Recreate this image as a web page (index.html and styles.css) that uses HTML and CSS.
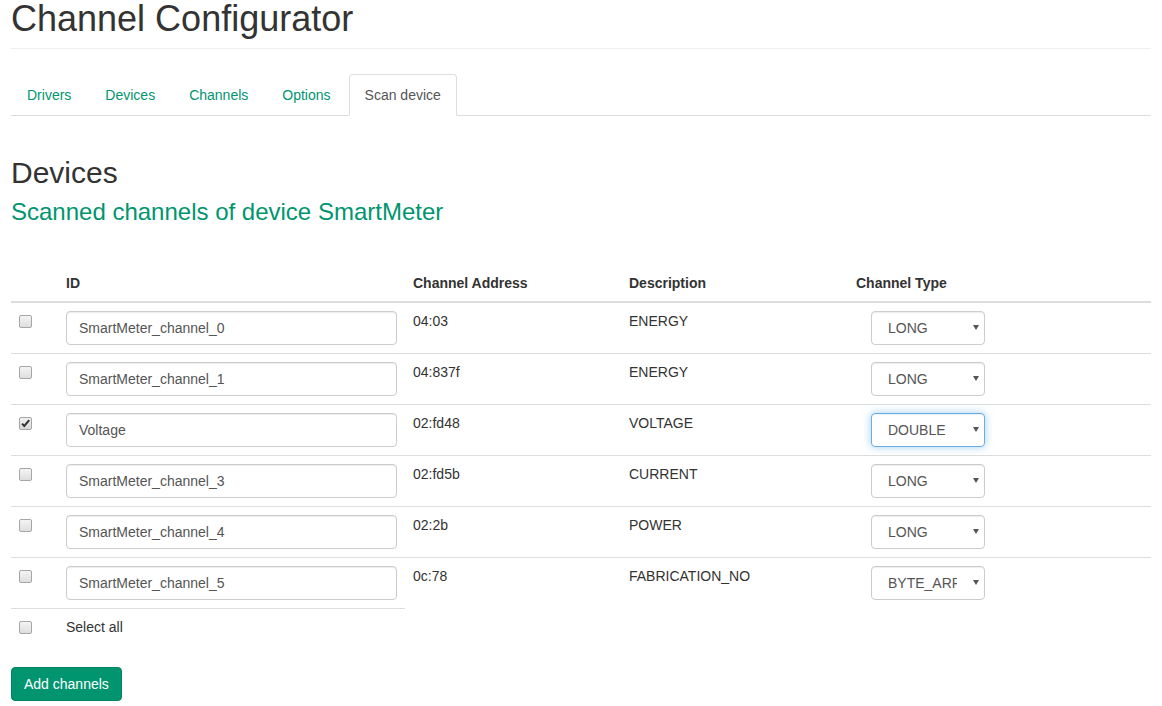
FILE: index.html
```html
<!DOCTYPE html>
<html>
<head>
<meta charset="utf-8">
<title>Channel Configurator</title>
<link rel="stylesheet" href="styles.css">
</head>
<body>
<div class="container">
  <div class="page-header"><h1>Channel Configurator</h1></div>
  <ul class="nav-tabs">
    <li><a href="#">Drivers</a></li>
    <li><a href="#">Devices</a></li>
    <li><a href="#">Channels</a></li>
    <li><a href="#">Options</a></li>
    <li class="active"><a href="#">Scan device</a></li>
  </ul>
  <div class="tab-content">
    <h2 class="title">Devices</h2>
    <h3 class="subtitle">Scanned channels of device SmartMeter</h3>
    <table class="table">
      <colgroup>
        <col class="c-check"><col class="c-id"><col class="c-addr"><col class="c-desc"><col class="c-type">
      </colgroup>
      <thead>
        <tr><th></th><th>ID</th><th>Channel Address</th><th>Description</th><th>Channel Type</th></tr>
      </thead>
      <tbody>
        <tr>
          <td><input type="checkbox" class="chk"></td>
          <td><input type="text" class="form-control" value="SmartMeter_channel_0"></td>
          <td>04:03</td><td>ENERGY</td>
          <td><div class="sel-wrap"><select class="form-control sel"><option>LONG</option></select></div></td>
        </tr>
        <tr>
          <td><input type="checkbox" class="chk"></td>
          <td><input type="text" class="form-control" value="SmartMeter_channel_1"></td>
          <td>04:837f</td><td>ENERGY</td>
          <td><div class="sel-wrap"><select class="form-control sel"><option>LONG</option></select></div></td>
        </tr>
        <tr>
          <td><input type="checkbox" class="chk" checked></td>
          <td><input type="text" class="form-control" value="Voltage"></td>
          <td>02:fd48</td><td>VOLTAGE</td>
          <td><div class="sel-wrap"><select class="form-control sel is-focus"><option>DOUBLE</option></select></div></td>
        </tr>
        <tr>
          <td><input type="checkbox" class="chk"></td>
          <td><input type="text" class="form-control" value="SmartMeter_channel_3"></td>
          <td>02:fd5b</td><td>CURRENT</td>
          <td><div class="sel-wrap"><select class="form-control sel"><option>LONG</option></select></div></td>
        </tr>
        <tr>
          <td><input type="checkbox" class="chk"></td>
          <td><input type="text" class="form-control" value="SmartMeter_channel_4"></td>
          <td>02:2b</td><td>POWER</td>
          <td><div class="sel-wrap"><select class="form-control sel"><option>LONG</option></select></div></td>
        </tr>
        <tr>
          <td><input type="checkbox" class="chk"></td>
          <td><input type="text" class="form-control" value="SmartMeter_channel_5"></td>
          <td>0c:78</td><td>FABRICATION_NO</td>
          <td><div class="sel-wrap"><select class="form-control sel"><option>BYTE_ARRAY</option></select></div></td>
        </tr>
        <tr class="select-all">
          <td><input type="checkbox" class="chk"></td>
          <td>Select all</td>
        </tr>
      </tbody>
    </table>
    <button class="btn">Add channels</button>
  </div>
</div>
</body>
</html>
```
FILE: styles.css
```css
* { box-sizing: border-box; }
html, body { margin: 0; padding: 0; }
body {
  font-family: "Liberation Sans", Arial, Helvetica, sans-serif;
  font-size: 14px;
  line-height: 20px;
  color: #333;
  background: #fff;
}
.container { padding: 0 11px; }
.page-header {
  padding-bottom: 9px;
  border-bottom: 1px solid #eee;
  margin: 0 0 25px;
}
.page-header h1 {
  margin: -1px 0 0;
  font-size: 36px;
  line-height: 1.1;
  font-weight: 500;
}
.nav-tabs {
  list-style: none;
  margin: 0;
  padding: 0;
  display: flex;
  border-bottom: 1px solid #ddd;
}
.nav-tabs li { margin-bottom: -1px; }
.nav-tabs a {
  display: block;
  padding: 10px 15px;
  margin-right: 2px;
  line-height: 20px;
  border: 1px solid transparent;
  border-radius: 4px 4px 0 0;
  color: #00956f;
  text-decoration: none;
}
.nav-tabs .active a {
  color: #555;
  background: #fff;
  border-color: #ddd #ddd transparent;
}
.title {
  margin: 40px 0 0;
  font-size: 30px;
  line-height: 33px;
  font-weight: 500;
}
.subtitle {
  margin: 10px 0 0;
  font-size: 24px;
  line-height: 26.4px;
  font-weight: 500;
  color: #00956f;
}
.table {
  margin-top: 40px;
  width: 100%;
  border-collapse: collapse;
  border-spacing: 0;
  table-layout: fixed;
  margin-bottom: 22px;
}
.c-check { width: 47px; }
.c-id { width: 347px; }
.c-addr { width: 216px; }
.c-desc { width: 227px; }
.table th, .table td {
  padding: 8px;
  text-align: left;
  vertical-align: top;
  line-height: 20px;
}
.table th {
  font-weight: bold;
  border-bottom: 2px solid #ddd;
}
.table tbody td { border-top: 1px solid #ddd; }
.table tbody tr:first-child td { border-top: 0; }
.chk {
  -webkit-appearance: none;
  appearance: none;
  display: block;
  margin: 4px 0 0;
  width: 13px;
  height: 13px;
  border: 1px solid #a6a6a6;
  border-radius: 2px;
  background: linear-gradient(#f4f4f4, #dedede);
}
.chk:checked {
  background: url("data:image/svg+xml,%3Csvg xmlns='http://www.w3.org/2000/svg' width='11' height='11' viewBox='0 0 11 11'%3E%3Cpath d='M2 5.6 L4.3 8 L9.2 2.2' fill='none' stroke='%23333' stroke-width='2'/%3E%3C/svg%3E") center / 11px 11px no-repeat, linear-gradient(#f0f0f0, #d8d8d8);
}
.form-control {
  display: block;
  width: 100%;
  height: 34px;
  padding: 6px 12px;
  font-family: inherit;
  font-size: 14px;
  line-height: 20px;
  color: #555;
  background: #fff;
  border: 1px solid #ccc;
  border-radius: 4px;
  box-shadow: inset 0 1px 1px rgba(0,0,0,.075);
  outline: none;
}
.sel-wrap {
  padding-left: 15px;
  position: relative;
  width: 129px;
}
.sel-wrap::after {
  content: "";
  position: absolute;
  left: 117px;
  top: 14px;
  border-left: 3px solid transparent;
  border-right: 3px solid transparent;
  border-top: 5px solid #555;
  pointer-events: none;
}
.sel {
  -webkit-appearance: none;
  appearance: none;
  width: 114px;
  padding: 6px 27px 6px 16px;
}
.sel.is-focus {
  border-color: #66afe9;
  box-shadow: inset 0 1px 1px rgba(0,0,0,.075), 0 0 8px rgba(102,175,233,.6);
}
.btn {
  display: inline-block;
  font-family: inherit;
  font-size: 14px;
  line-height: 20px;
  padding: 6px 12px;
  color: #fff;
  background: #00956f;
  border: 1px solid #008462;
  border-radius: 4px;
  cursor: pointer;
}
```
